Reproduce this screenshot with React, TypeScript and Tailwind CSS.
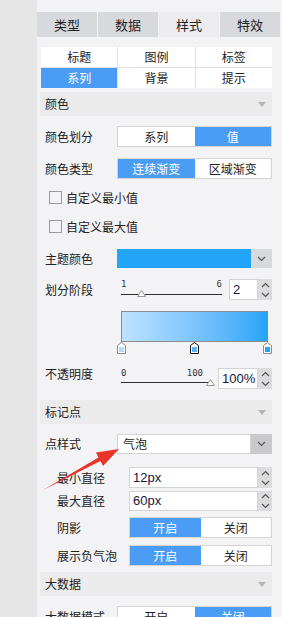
import { FC, ReactNode } from "react";

const BLUE = "bg-[#4a9cf4]";

const Chevron: FC<{ up?: boolean }> = ({ up }) => (
    <svg width="9" height="6" viewBox="0 0 9 6" className="block">
        <polyline
            points={up ? "1,5 4.5,1.5 8,5" : "1,1 4.5,4.5 8,1"}
            fill="none"
            stroke="#555"
            strokeWidth="1.2"
        />
    </svg>
);

const Spinner: FC = () => (
    <div className="flex h-full w-[14px] flex-col items-center justify-center gap-[4px] bg-[#dcdcdf]">
        <Chevron up />
        <Chevron />
    </div>
);

const SectionHeader: FC<{ title: string; className?: string }> = ({ title, className }) => (
    <div className={`flex h-[24px] items-center justify-between bg-[#ebebeb] pl-[5px] pr-[6px] text-[12px] ${className ?? ""}`}>
        <span>{title}</span>
        <svg width="8" height="5" viewBox="0 0 8 5">
            <polygon points="0,0 8,0 4,5" fill="#b4b4b4" />
        </svg>
    </div>
);

const Row: FC<{ label: string; indent?: boolean; className?: string; children: ReactNode }> = ({
    label,
    indent,
    className,
    children,
}) => (
    <div className={`flex items-center ${className ?? ""}`}>
        <div className={`shrink-0 ${indent ? "w-[89px] pl-[17px]" : "w-[77px] pl-[5px]"} text-[12px]`}>{label}</div>
        <div className="flex h-full flex-1 items-stretch">{children}</div>
    </div>
);

const Segmented: FC<{ items: string[]; active: number }> = ({ items, active }) => (
    <div className="flex h-full w-full border border-[#d4d4d4] bg-white">
        {items.map((t, i) => (
            <div
                key={t}
                className={`flex flex-1 items-center justify-center text-[12px] ${i === active ? `${BLUE} text-white` : "text-[#222]"}`}
            >
                {t}
            </div>
        ))}
    </div>
);

const NumberInput: FC<{ value: string; width: string }> = ({ value, width }) => (
    <div className="flex h-full">
        <div className={`flex items-center border border-[#d4d4d4] bg-white pl-[3px] font-['Liberation_Sans',sans-serif] text-[13px] text-[#16163a] ${width}`}>
            {value}
        </div>
        <Spinner />
    </div>
);

const Checkbox: FC<{ label: string; className?: string }> = ({ label, className }) => (
    <div className={`flex h-[13px] items-center gap-[4px] pl-[9px] text-[12px] ${className ?? ""}`}>
        <div className="h-[13px] w-[13px] border border-[#9a9a9a]" />
        <span>{label}</span>
    </div>
);

const Marker: FC<{ fill: string; stroke: string }> = ({ fill, stroke }) => (
    <svg width="9" height="12" viewBox="0 0 9 12" className="block">
        <polygon points="4.5,0.5 8.5,3.5 8.5,11.5 0.5,11.5 0.5,3.5" fill="#fff" stroke={stroke} strokeWidth="1" />
        <rect x="2" y="5" width="5" height="5" fill={fill} />
    </svg>
);

const Thumb: FC = () => (
    <svg width="9" height="7" viewBox="0 0 9 7" className="block">
        <polygon points="4.5,0.5 8.5,6.5 0.5,6.5" fill="#fff" stroke="#999" strokeWidth="1" />
    </svg>
);

const App: FC = () => {
    const tabs = ["类型", "数据", "样式", "特效"];
    const subTabs = ["标题", "图例", "标签", "系列", "背景", "提示"];

    return (
        <div className="relative flex h-[617px] w-[282px] overflow-hidden font-['Noto_Sans_CJK_SC',sans-serif] text-[#222]">
            <div className="h-full w-[37px] shrink-0 bg-[#e6e6e6]" />
            <div className="h-full flex-1 bg-[#f3f3f5] pt-[12px]">
                <div className="grid h-[25px] w-[243px] grid-cols-4 gap-px">
                    {tabs.map((t, i) => (
                        <div
                            key={t}
                            className={`flex items-center justify-center text-[13px] ${i === 2 ? "bg-[#ececef]" : "bg-[#d8d9dc]"}`}
                        >
                            {t}
                        </div>
                    ))}
                </div>

                <div className="ml-[3px] w-[232px]">
                    <div className="ml-px mt-[10px] grid grid-cols-3 gap-px bg-[#e2e2e4]">
                        {subTabs.map((t, i) => (
                            <div
                                key={t}
                                className={`flex h-[20px] items-center justify-center text-[12px] ${i === 3 ? `${BLUE} text-white` : "bg-white"}`}
                            >
                                {t}
                            </div>
                        ))}
                    </div>

                    <SectionHeader title="颜色" className="mt-[4px]" />

                    <Row label="颜色划分" className="mt-[10px] h-[21px]">
                        <Segmented items={["系列", "值"]} active={1} />
                    </Row>
                    <Row label="颜色类型" className="mt-[11px] h-[21px]">
                        <Segmented items={["连续渐变", "区域渐变"]} active={0} />
                    </Row>

                    <Checkbox label="自定义最小值" className="mt-[12px]" />
                    <Checkbox label="自定义最大值" className="mt-[16px]" />

                    <Row label="主题颜色" className="mt-[16px] h-[19px]">
                        <div className="flex-1 bg-[#22a5f8]" />
                        <div className="flex w-[21px] items-center justify-center bg-[#d8d9dc]">
                            <Chevron />
                        </div>
                    </Row>

                    <Row label="划分阶段" className="mt-[11px] h-[21px]">
                        <div className="relative ml-[4px] w-[101px] font-['DejaVu_Sans_Mono',monospace] text-[9px] text-[#333]">
                            <div className="flex justify-between leading-[10px]">
                                <span>1</span>
                                <span>6</span>
                            </div>
                            <div className="mt-[5px] h-px bg-[#333]" />
                            <div className="absolute left-[16px] top-[11px]">
                                <Thumb />
                            </div>
                        </div>
                        <div className="ml-[7px]">
                            <NumberInput value="2" width="w-[29px]" />
                        </div>
                    </Row>

                    <div className="ml-[77px] mt-[11px] w-[155px]">
                        <div className="ml-[4px] h-[31px] w-[147px] border border-[#8c8c8c] bg-gradient-to-r from-[#bde3ff] to-[#22a4f8]" />
                        <div className="flex justify-between">
                            <Marker fill="#b3dcfb" stroke="#8c8c8c" />
                            <Marker fill="#5ab6f6" stroke="#111" />
                            <Marker fill="#22a4f8" stroke="#8c8c8c" />
                        </div>
                    </div>

                    <div className="mt-[14px] flex h-[21px]">
                        <div className="-mt-[3px] w-[77px] shrink-0 pl-[5px] text-[12px]">不透明度</div>
                        <div className="relative ml-[4px] w-[90px] font-['DejaVu_Sans_Mono',monospace] text-[9px] text-[#333]">
                            <div className="flex justify-between pr-[8px] leading-[10px]">
                                <span>0</span>
                                <span>100</span>
                            </div>
                            <div className="mt-[4px] h-px bg-[#333]" />
                            <div className="absolute left-[85px] top-[11px]">
                                <Thumb />
                            </div>
                        </div>
                        <div className="ml-[7px]">
                            <NumberInput value="100%" width="w-[40px]" />
                        </div>
                    </div>

                    <SectionHeader title="标记点" className="mt-[11px]" />

                    <Row label="点样式" className="mt-[10px] h-[20px]">
                        <div className="flex flex-1 items-center border border-[#d4d4d4] bg-white pl-[5px] text-[12px]">气泡</div>
                        <div className="flex w-[21px] items-center justify-center bg-[#c9c9cc]">
                            <Chevron />
                        </div>
                    </Row>

                    <Row label="最小直径" indent className="mt-[13px] h-[21px]">
                        <NumberInput value="12px" width="w-[129px]" />
                    </Row>
                    <Row label="最大直径" indent className="mt-[3px] h-[20px]">
                        <NumberInput value="60px" width="w-[129px]" />
                    </Row>
                    <Row label="阴影" indent className="mt-[6px] h-[21px]">
                        <Segmented items={["开启", "关闭"]} active={0} />
                    </Row>
                    <Row label="展示负气泡" indent className="mt-[7px] h-[21px]">
                        <Segmented items={["开启", "关闭"]} active={0} />
                    </Row>

                    <SectionHeader title="大数据" className="mt-[6px]" />

                    <Row label="大数据模式" className="mt-[10px] h-[21px]">
                        <Segmented items={["开启", "关闭"]} active={1} />
                    </Row>
                </div>
            </div>

            <svg className="pointer-events-none absolute left-0 top-0" width="282" height="617" viewBox="0 0 282 617">
                <polygon
                    points="43,490 98.5,457.5 96,452.5 119,449 103,466 100.5,461 43,490"
                    fill="#e8352a"
                />
            </svg>
        </div>
    );
};

export default App;
